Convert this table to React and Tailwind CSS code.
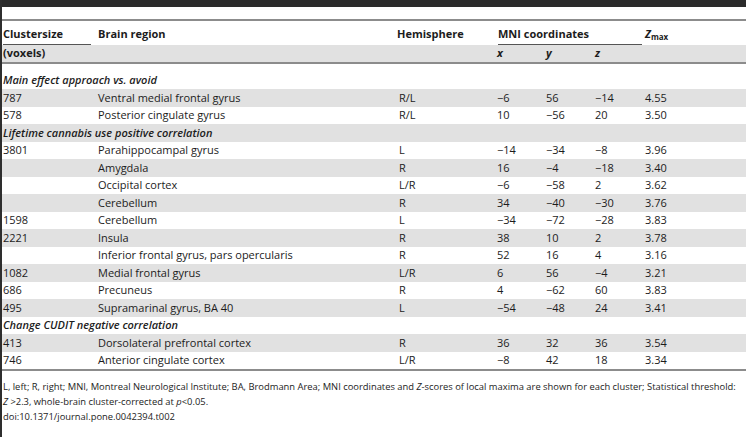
const sections = [
  { title: "Main effect approach vs. avoid" },
  { size: "787", region: "Ventral medial frontal gyrus", hemi: "R/L", x: "−6", y: "56", z: "−14", zmax: "4.55" },
  { size: "578", region: "Posterior cingulate gyrus", hemi: "R/L", x: "10", y: "−56", z: "20", zmax: "3.50" },
  { title: "Lifetime cannabis use positive correlation" },
  { size: "3801", region: "Parahippocampal gyrus", hemi: "L", x: "−14", y: "−34", z: "−8", zmax: "3.96" },
  { size: "", region: "Amygdala", hemi: "R", x: "16", y: "−4", z: "−18", zmax: "3.40" },
  { size: "", region: "Occipital cortex", hemi: "L/R", x: "−6", y: "−58", z: "2", zmax: "3.62" },
  { size: "", region: "Cerebellum", hemi: "R", x: "34", y: "−40", z: "−30", zmax: "3.76" },
  { size: "1598", region: "Cerebellum", hemi: "L", x: "−34", y: "−72", z: "−28", zmax: "3.83" },
  { size: "2221", region: "Insula", hemi: "R", x: "38", y: "10", z: "2", zmax: "3.78" },
  { size: "", region: "Inferior frontal gyrus, pars opercularis", hemi: "R", x: "52", y: "16", z: "4", zmax: "3.16" },
  { size: "1082", region: "Medial frontal gyrus", hemi: "L/R", x: "6", y: "56", z: "−4", zmax: "3.21" },
  { size: "686", region: "Precuneus", hemi: "R", x: "4", y: "−62", z: "60", zmax: "3.83" },
  { size: "495", region: "Supramarinal gyrus, BA 40", hemi: "L", x: "−54", y: "−48", z: "24", zmax: "3.41" },
  { title: "Change CUDIT negative correlation" },
  { size: "413", region: "Dorsolateral prefrontal cortex", hemi: "R", x: "36", y: "32", z: "36", zmax: "3.54" },
  { size: "746", region: "Anterior cingulate cortex", hemi: "L/R", x: "−8", y: "42", z: "18", zmax: "3.34" },
];

const cols = "grid grid-cols-[92px_302px_100px_49px_49px_50px_1fr]";

const App = () => {
  return (
    <div
      className="w-[746px] h-[437px] bg-white text-[#1c1c1c] text-[11px] border-l-2 border-[#2e2e2e] overflow-hidden"
      style={{ fontFamily: '"Open Sans", "DejaVu Sans", sans-serif' }}
    >
      <div className="h-[7px] bg-[#2b2b2b]" />
      <div className="h-[12px]" />
      <div className="h-[2px] bg-[#8c8c8c]" />

      {/* header */}
      <div className={`${cols} h-[24px] font-bold items-end`}>
        <div className="pl-[1px] pr-[3px]">
          <div className="border-b border-[#555] pb-[2px] leading-[16px]">Clustersize</div>
        </div>
        <div className="pl-[4px] pb-[3px] leading-[16px]">Brain region</div>
        <div className="pl-[1px] pb-[3px] leading-[16px]">Hemisphere</div>
        <div className="col-span-3 pl-[2px] pr-[2px]">
          <div className="border-b border-[#555] pb-[2px] leading-[16px]">MNI coordinates</div>
        </div>
        <div className="pl-[1px] pb-[3px] leading-[16px]">
          <span className="italic">Z</span>
          <sub className="text-[8px] font-bold not-italic">max</sub>
        </div>
      </div>
      <div className={`${cols} h-[17px] items-center bg-[#e1e1e1] font-bold`}>
        <div className="pl-[1px]">(voxels)</div>
        <div />
        <div />
        <div className="pl-[1px] italic">x</div>
        <div className="pl-[1px] italic">y</div>
        <div className="pl-[1px] italic">z</div>
        <div />
      </div>
      <div className="h-[1.5px] bg-[#8c8c8c]" />
      <div className="h-[8px]" />

      {sections.map((r, i) =>
        r.title ? (
          <div
            key={i}
            className={`h-[17.5px] flex items-center pl-[1px] italic font-semibold ${i % 2 === 1 ? "bg-[#e1e1e1]" : ""}`}
          >
            {r.title}
          </div>
        ) : (
          <div key={i} className={`${cols} h-[17.5px] items-center ${i % 2 === 1 ? "bg-[#e1e1e1]" : ""}`}>
            <div className="pl-[1px]">{r.size}</div>
            <div className="pl-[4px]">{r.region}</div>
            <div className="pl-[3px]">{r.hemi}</div>
            <div className="pl-[1px]">{r.x}</div>
            <div className="pl-[1px]">{r.y}</div>
            <div className="pl-[1px]">{r.z}</div>
            <div className="pl-[1px]">{r.zmax}</div>
          </div>
        )
      )}
      <div className="h-[1.5px] bg-[#8c8c8c]" />

      <div className="pt-[8px] pl-[1px] text-[9.4px] leading-[15px]">
        <p className="whitespace-nowrap">
          L, left; R, right; MNI, Montreal Neurological Institute; BA, Brodmann Area; MNI coordinates and{" "}
          <span className="italic">Z</span>-scores of local maxima are shown for each cluster; Statistical threshold:
        </p>
        <p>
          <span className="italic">Z</span> &gt;2.3, whole-brain cluster-corrected at <span className="italic">p</span>&lt;0.05.
        </p>
        <p>doi:10.1371/journal.pone.0042394.t002</p>
      </div>
    </div>
  );
};

export default App;
